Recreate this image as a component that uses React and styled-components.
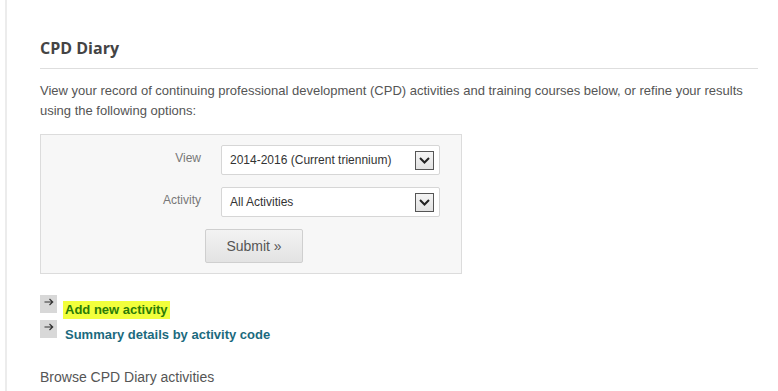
import React from 'react'
import styled, { createGlobalStyle } from 'styled-components'

const GlobalStyle = createGlobalStyle`
  html, body {
    margin: 0;
    padding: 0;
    background: #fff;
  }
  body {
    font-family: "Liberation Sans", Arial, sans-serif;
    color: #555;
  }
`

const Page = styled.div`
  margin-left: 5px;
  border-left: 2px solid #ececec;
  min-height: 391px;
  padding: 36px 20px 0 33px;
  box-sizing: border-box;
`

const Title = styled.h2`
  margin: 0;
  font-family: "Open Sans", sans-serif;
  font-weight: 700;
  font-size: 16px;
  line-height: 24px;
  color: #444;
  padding-bottom: 8px;
  border-bottom: 1px solid #dedede;
`

const Intro = styled.p`
  margin: 12px 0 13px;
  font-size: 13px;
  line-height: 20px;
  color: #555;
`

const FilterBox = styled.form`
  width: 422px;
  box-sizing: border-box;
  background: #f7f7f7;
  border: 1px solid #dcdcdc;
  padding: 10px 0 10px;
  display: flex;
  flex-direction: column;
  align-items: center;
`

const FieldGrid = styled.div`
  display: grid;
  grid-template-columns: 160px 219px;
  column-gap: 20px;
  row-gap: 12px;
  align-items: center;
  align-self: flex-start;
`

const Label = styled.label`
  text-align: right;
  font-size: 12px;
  color: #777;
  padding-bottom: 4px;
`

const SelectBox = styled.div`
  height: 30px;
  box-sizing: border-box;
  background: #fff;
  border: 1px solid #d6d6d6;
  border-radius: 2px;
  display: flex;
  align-items: center;
  justify-content: space-between;
  padding: 0 5px 0 8px;
  font-size: 12px;
  color: #333;
`

const ArrowBox = styled.span`
  width: 19px;
  height: 19px;
  box-sizing: border-box;
  border: 1px solid #555;
  background: linear-gradient(#f4f4f4, #e2e2e2);
  display: flex;
  align-items: center;
  justify-content: center;
`

const SubmitButton = styled.button`
  margin-top: 12px;
  width: 98px;
  height: 34px;
  border: 1px solid #cfcfcf;
  border-radius: 2px;
  background: linear-gradient(#f3f3f3, #e3e3e3);
  font-family: "Liberation Sans", Arial, sans-serif;
  font-size: 14px;
  color: #555;
  margin-left: 6px;
`

const Links = styled.div`
  margin-top: 21px;
  display: flex;
  flex-direction: column;
  gap: 7px;
`

const LinkRow = styled.div`
  display: flex;
  align-items: flex-start;
  gap: 8px;
  height: 18px;
`

const ArrowIcon = styled.span`
  width: 17px;
  height: 18px;
  flex-shrink: 0;
  background: #d8d8d8;
  display: flex;
  justify-content: center;
  padding-top: 3px;
  box-sizing: border-box;
`

const LinkText = styled.a`
  font-size: 13px;
  font-weight: 700;
  text-decoration: none;
  color: ${p => p.$tone === 'green' ? '#2c7c06' : '#1b6a7e'};
  background: ${p => p.$highlight ? '#f2ff3c' : 'transparent'};
  padding: 0 ${p => p.$highlight ? '2px' : '0'};
  margin-left: ${p => p.$highlight ? '-2px' : '0'};
  line-height: 18px;
  margin-top: 6px;
`

const Browse = styled.p`
  margin: 31px 0 0;
  font-size: 14px;
  color: #555;
`

const Chevron = () => (
  <svg width="11" height="7" viewBox="0 0 11 7">
    <path d="M1 1 L5.5 5.5 L10 1" fill="none" stroke="#222" strokeWidth="2" />
  </svg>
)

const RightArrow = () => (
  <svg width="10" height="8" viewBox="0 0 10 8">
    <path d="M0.5 4 H8.5 M5.5 1 L8.7 4 L5.5 7" fill="none" stroke="#333" strokeWidth="1.2" />
  </svg>
)

const Select = ({ value }) => (
  <SelectBox>
    <span>{value}</span>
    <ArrowBox><Chevron /></ArrowBox>
  </SelectBox>
)

export default function App() {
  return (
    <>
      <GlobalStyle />
      <Page>
        <Title>CPD Diary</Title>
        <Intro>
          View your record of continuing professional development (CPD) activities and training courses below, or refine your results using the following options:
        </Intro>
        <FilterBox onSubmit={e => e.preventDefault()}>
          <FieldGrid>
            <Label>View</Label>
            <Select value="2014-2016 (Current triennium)" />
            <Label>Activity</Label>
            <Select value="All Activities" />
          </FieldGrid>
          <SubmitButton type="submit">Submit »</SubmitButton>
        </FilterBox>
        <Links>
          <LinkRow>
            <ArrowIcon><RightArrow /></ArrowIcon>
            <LinkText href="#" $tone="green" $highlight>Add new activity</LinkText>
          </LinkRow>
          <LinkRow>
            <ArrowIcon><RightArrow /></ArrowIcon>
            <LinkText href="#">Summary details by activity code</LinkText>
          </LinkRow>
        </Links>
        <Browse>Browse CPD Diary activities</Browse>
      </Page>
    </>
  )
}
